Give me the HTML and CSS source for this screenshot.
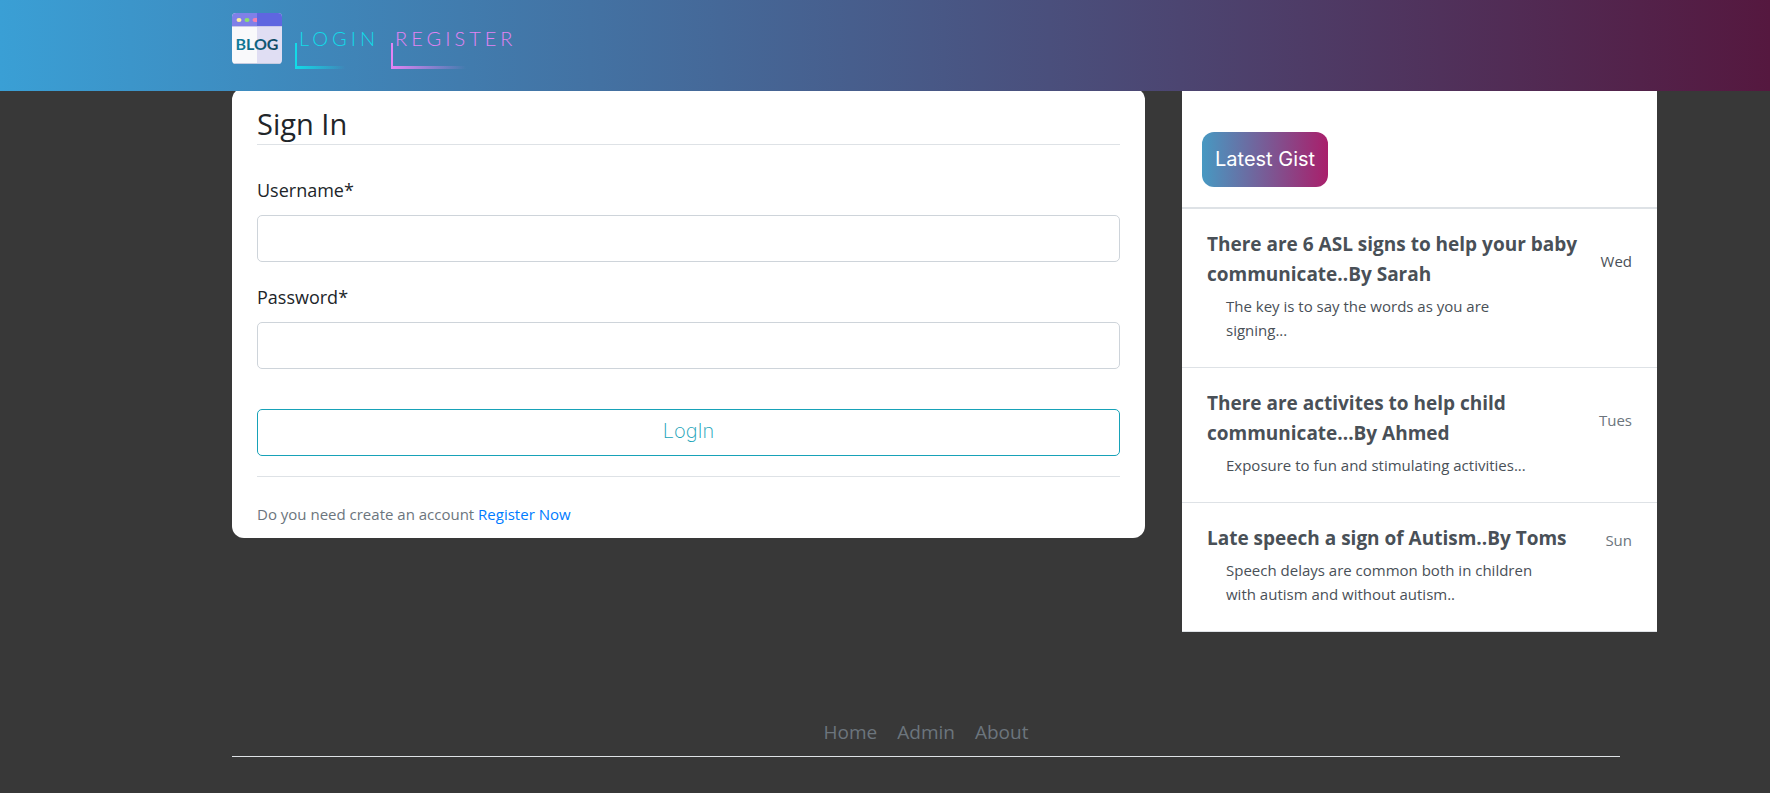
FILE: index.html
```html
<!DOCTYPE html>
<html lang="en">
<head>
<meta charset="utf-8">
<meta name="viewport" content="width=device-width, initial-scale=1">
<title>Sign In</title>
<link rel="stylesheet" href="styles.css">
</head>
<body>
<header class="navbar">
  <a class="brand" href="#" aria-label="Blog home">
    <svg class="logo" viewBox="0 0 50 51" aria-hidden="true">
      <defs>
        <clipPath id="window"><rect width="50" height="51" rx="4"/></clipPath>
        <linearGradient id="ink" x1="0" x2="1"><stop offset="0" stop-color="#11809f"/><stop offset="1" stop-color="#0f4560"/></linearGradient>
      </defs>
      <g clip-path="url(#window)">
        <rect width="25" height="51" fill="#f9f9fb"/>
        <rect x="25" width="25" height="51" fill="#e0def3"/>
        <rect width="25" height="13" fill="#8080e8"/>
        <rect x="25" width="25" height="13" fill="#5f66e0"/>
        <rect y="13" width="50" height="1" fill="#c9c8ea"/>
        <rect y="50" width="50" height="1" fill="#c5cbe0"/>
      </g>
      <ellipse cx="7" cy="7" rx="2.5" ry="2" fill="#fff0a0"/>
      <ellipse cx="15" cy="7" rx="2.5" ry="2" fill="#8be06e"/>
      <path d="M25 5h-2a2.500 2 0 0 0 0 4h2z" fill="#f580b0"/>
      <text class="logo-text" x="25" y="37" text-anchor="middle" fill="url(#ink)">BLOG</text>
    </svg>
  </a>
  <nav class="nav-links" aria-label="Account">
    <a class="nav-link login" href="#">Login</a>
    <a class="nav-link register" href="#">Register</a>
  </nav>
</header>

<main class="page">
  <section class="card">
    <form>
      <h1 class="card-title">Sign In</h1>
      <div class="field">
        <label for="username">Username*</label>
        <input id="username" type="text" required>
      </div>
      <div class="field">
        <label for="password">Password*</label>
        <input id="password" type="password" required>
      </div>
      <button class="submit" type="submit">LogIn</button>
    </form>
    <p class="signup">Do you need create an account <a href="#">Register Now</a></p>
  </section>

  <aside class="gists">
    <div class="gists-head"><h2 class="badge">Latest Gist</h2></div>
    <article class="gist">
      <div class="gist-top">
        <h3>There are 6 ASL signs to help your baby communicate..By Sarah</h3>
        <span class="day current">Wed</span>
      </div>
      <p>The key is to say the words as you are signing...</p>
    </article>
    <article class="gist">
      <div class="gist-top">
        <h3>There are activites to help child communicate...By Ahmed</h3>
        <span class="day">Tues</span>
      </div>
      <p>Exposure to fun and stimulating activities...</p>
    </article>
    <article class="gist">
      <div class="gist-top">
        <h3>Late speech a sign of Autism..By Toms</h3>
        <span class="day">Sun</span>
      </div>
      <p>Speech delays are common both in children with autism and without autism..</p>
    </article>
  </aside>
</main>

<footer class="footer">
  <nav class="footer-links" aria-label="Footer">
    <a href="#">Home</a>
    <a href="#">Admin</a>
    <a href="#">About</a>
  </nav>
</footer>
</body>
</html>
```

FILE: styles.css
```css
* {
  box-sizing: border-box;
}

body {
  margin: 0;
  background: #383838;
  color: #212529;
  font-family: "Open Sans", "Noto Sans", sans-serif;
  font-size: 15px;
  line-height: 24px;
}

h1, h2, h3, p {
  margin: 0;
}

a {
  text-decoration: none;
}

.navbar {
  position: sticky;
  top: 0;
  z-index: 2;
  display: flex;
  align-items: flex-start;
  gap: 13px;
  padding: 13px 150px 14px 232px;
  background: linear-gradient(to right, #3a9fd5, #55183f);
}

.brand {
  display: block;
  height: 64px;
}

.logo {
  display: block;
  width: 50px;
  height: 51px;
}

.logo-text {
  font-family: Lato, sans-serif;
  font-size: 16px;
  font-weight: 700;
}

.nav-links {
  display: flex;
  gap: 12px;
  padding-top: 10px;
}

/* L-shaped corner: a short upright and a fading underline */
.nav-link {
  padding: 0 0 16px 4px;
  background:
    linear-gradient(currentColor, currentColor) left bottom / 2px 26px no-repeat,
    linear-gradient(to right, currentColor, transparent 60%) left bottom / 100% 3px no-repeat;
  font-family: Lato, sans-serif;
  font-size: 20px;
  font-weight: 300;
  line-height: 30px;
  letter-spacing: 4px;
  text-transform: uppercase;
}

.login {
  color: #12dbe8;
}

.register {
  color: #e383f3;
}

.page {
  display: grid;
  grid-template-columns: minmax(0, 913fr) minmax(0, 475fr);
  gap: 37px;
  align-items: start;
  margin-top: -3px;
  padding: 0 113px 0 232px;
}

.card {
  padding: 16px 25px 12px;
  border-radius: 12px;
  background: #fff;
}

.card-title {
  margin-bottom: 30px;
  border-bottom: 1px solid #dee2e6;
  font-size: 29px;
  font-weight: 400;
  line-height: 40px;
}

.field {
  display: grid;
  gap: 10px;
  margin-bottom: 20px;
  font-size: 18px;
  line-height: 30px;
}

.field input {
  width: 100%;
  height: 47px;
  padding: 8px 16px;
  border: 1px solid #ced4da;
  border-radius: 5px;
  background: #fff;
  font: inherit;
}

.submit {
  width: 100%;
  height: 47px;
  margin-top: 20px;
  padding: 0 0 3px;
  border: 1px solid #17a2b8;
  border-radius: 5px;
  background: transparent;
  color: #17a2b8;
  font-family: Inter, sans-serif;
  font-size: 20px;
  font-weight: 200;
}

.signup {
  margin-top: 20px;
  padding-top: 25px;
  border-top: 1px solid #dee2e6;
  color: #6c757d;
}

.signup a {
  color: #007bff;
}

.gists {
  background: #fff;
}

.gists-head {
  display: flex;
  padding: 44px 20px 20px;
  border-bottom: 2px solid #dee2e6;
}

.badge {
  padding: 0 13px;
  border-radius: 12px;
  background: linear-gradient(to right, #4799c2, #a91f6b);
  color: #fff;
  font-family: Inter, sans-serif;
  font-size: 20px;
  font-weight: 400;
  line-height: 55px;
}

.gist {
  padding: 20px 25px 25px;
  border-bottom: 1px solid #dee2e6;
  color: #495057;
}

.gist-top {
  display: flex;
  justify-content: space-between;
  align-items: center;
  gap: 12px;
}

.gist h3 {
  font-size: 19px;
  font-weight: 700;
  line-height: 30px;
}

.gist p {
  margin: 5px 88px 0 19px;
}

.day {
  padding-top: 4px;
  color: #6c757d;
}

.day.current {
  color: #495057;
}

.footer {
  padding: 85px 150px 35px 232px;
}

.footer-links {
  display: flex;
  justify-content: center;
  gap: 20px;
  padding-bottom: 9px;
  border-bottom: 1px solid #dee2e6;
  font-size: 19px;
  line-height: 30px;
}

.footer-links a {
  color: #6c757d;
}

@media (max-width: 1200px) {
  .navbar,
  .page,
  .footer {
    padding-left: 24px;
    padding-right: 24px;
  }
}

@media (max-width: 800px) {
  .page {
    grid-template-columns: minmax(0, 1fr);
  }
}
```
